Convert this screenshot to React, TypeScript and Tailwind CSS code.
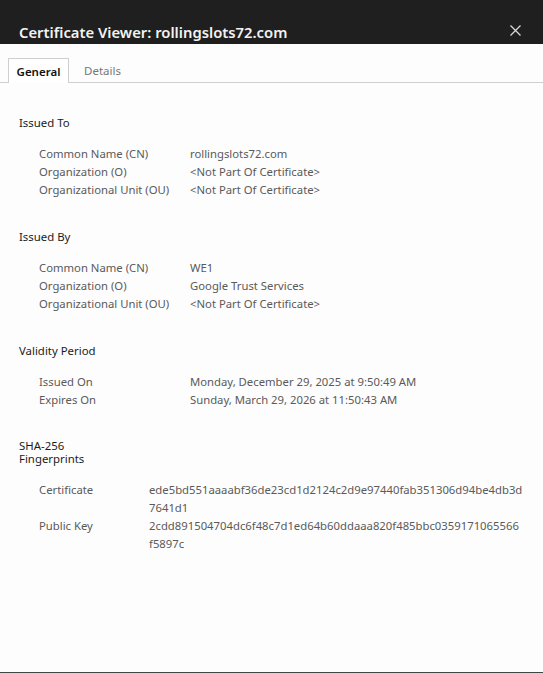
import React from "react";

const font = { fontFamily: '"Noto Sans", "Open Sans", sans-serif' };

function Row({ label, value, wide }: { label: string; value: React.ReactNode; wide?: boolean }) {
  return (
    <div className="flex leading-[18px]">
      <div className={wide ? "w-[110px] shrink-0" : "w-[151px] shrink-0"}>{label}</div>
      <div className="whitespace-nowrap">{value}</div>
    </div>
  );
}

function Section({ title, children }: { title: React.ReactNode; children: React.ReactNode }) {
  return (
    <div>
      <div className="text-[11.4px] leading-[18px] text-[#1b1b1b]">{title}</div>
      <div className="mt-[13px] pl-[20px] text-[11.3px] text-[#5a5a5a]">{children}</div>
    </div>
  );
}

export default function App() {
  const nc = "<Not Part Of Certificate>";
  return (
    <div className="w-[543px] h-[673px] bg-[#fdfdfd] flex flex-col border-b border-[#444]" style={font}>
      <div className="h-[44px] bg-[#1f1f1f] flex items-end justify-between px-[19px] shrink-0">
        <div className="text-[14.8px] font-semibold text-[#f2f2f2] leading-[22px] mb-[1px]">Certificate Viewer: rollingslots72.com</div>
        <svg width="11" height="11" viewBox="0 0 11 11" className="mb-[8px] mr-[3px]">
          <path d="M0.5 0.5 L10.5 10.5 M10.5 0.5 L0.5 10.5" stroke="#d8d8d8" strokeWidth="1.3" />
        </svg>
      </div>
      <div className="mt-[14px] flex border-b border-[#cfcfcf] pl-[8px] h-[25px] text-[11.5px]">
        <div className="h-[25px] w-[61px] pt-[2px] justify-center border border-b-0 border-[#cfcfcf] bg-white text-[#111] flex items-center font-semibold -mb-px">General</div>
        <div className="pl-[15px] pt-[2px] flex items-center text-[#777]">Details</div>
      </div>
      <div className="pl-[19px] pt-[31px] flex flex-col gap-[29px]">
        <Section title="Issued To">
          <Row label="Common Name (CN)" value="rollingslots72.com" />
          <Row label="Organization (O)" value={nc} />
          <Row label="Organizational Unit (OU)" value={nc} />
        </Section>
        <Section title="Issued By">
          <Row label="Common Name (CN)" value="WE1" />
          <Row label="Organization (O)" value="Google Trust Services" />
          <Row label="Organizational Unit (OU)" value={nc} />
        </Section>
        <Section title="Validity Period">
          <Row label="Issued On" value="Monday, December 29, 2025 at 9:50:49 AM" />
          <Row label="Expires On" value="Sunday, March 29, 2026 at 11:50:43 AM" />
        </Section>
        <div className="pt-[1px]">
          <div className="text-[11.4px] leading-[13px] text-[#1b1b1b]">SHA-256<br />Fingerprints</div>
          <div className="mt-[16px] pl-[20px] text-[11.3px] text-[#5a5a5a]">
            <Row wide label="Certificate" value={<>ede5bd551aaaabf36de23cd1d2124c2d9e97440fab351306d94be4db3d<br />7641d1</>} />
            <Row wide label="Public Key" value={<>2cdd891504704dc6f48c7d1ed64b60ddaaa820f485bbc0359171065566<br />f5897c</>} />
          </div>
        </div>
      </div>
    </div>
  );
}
